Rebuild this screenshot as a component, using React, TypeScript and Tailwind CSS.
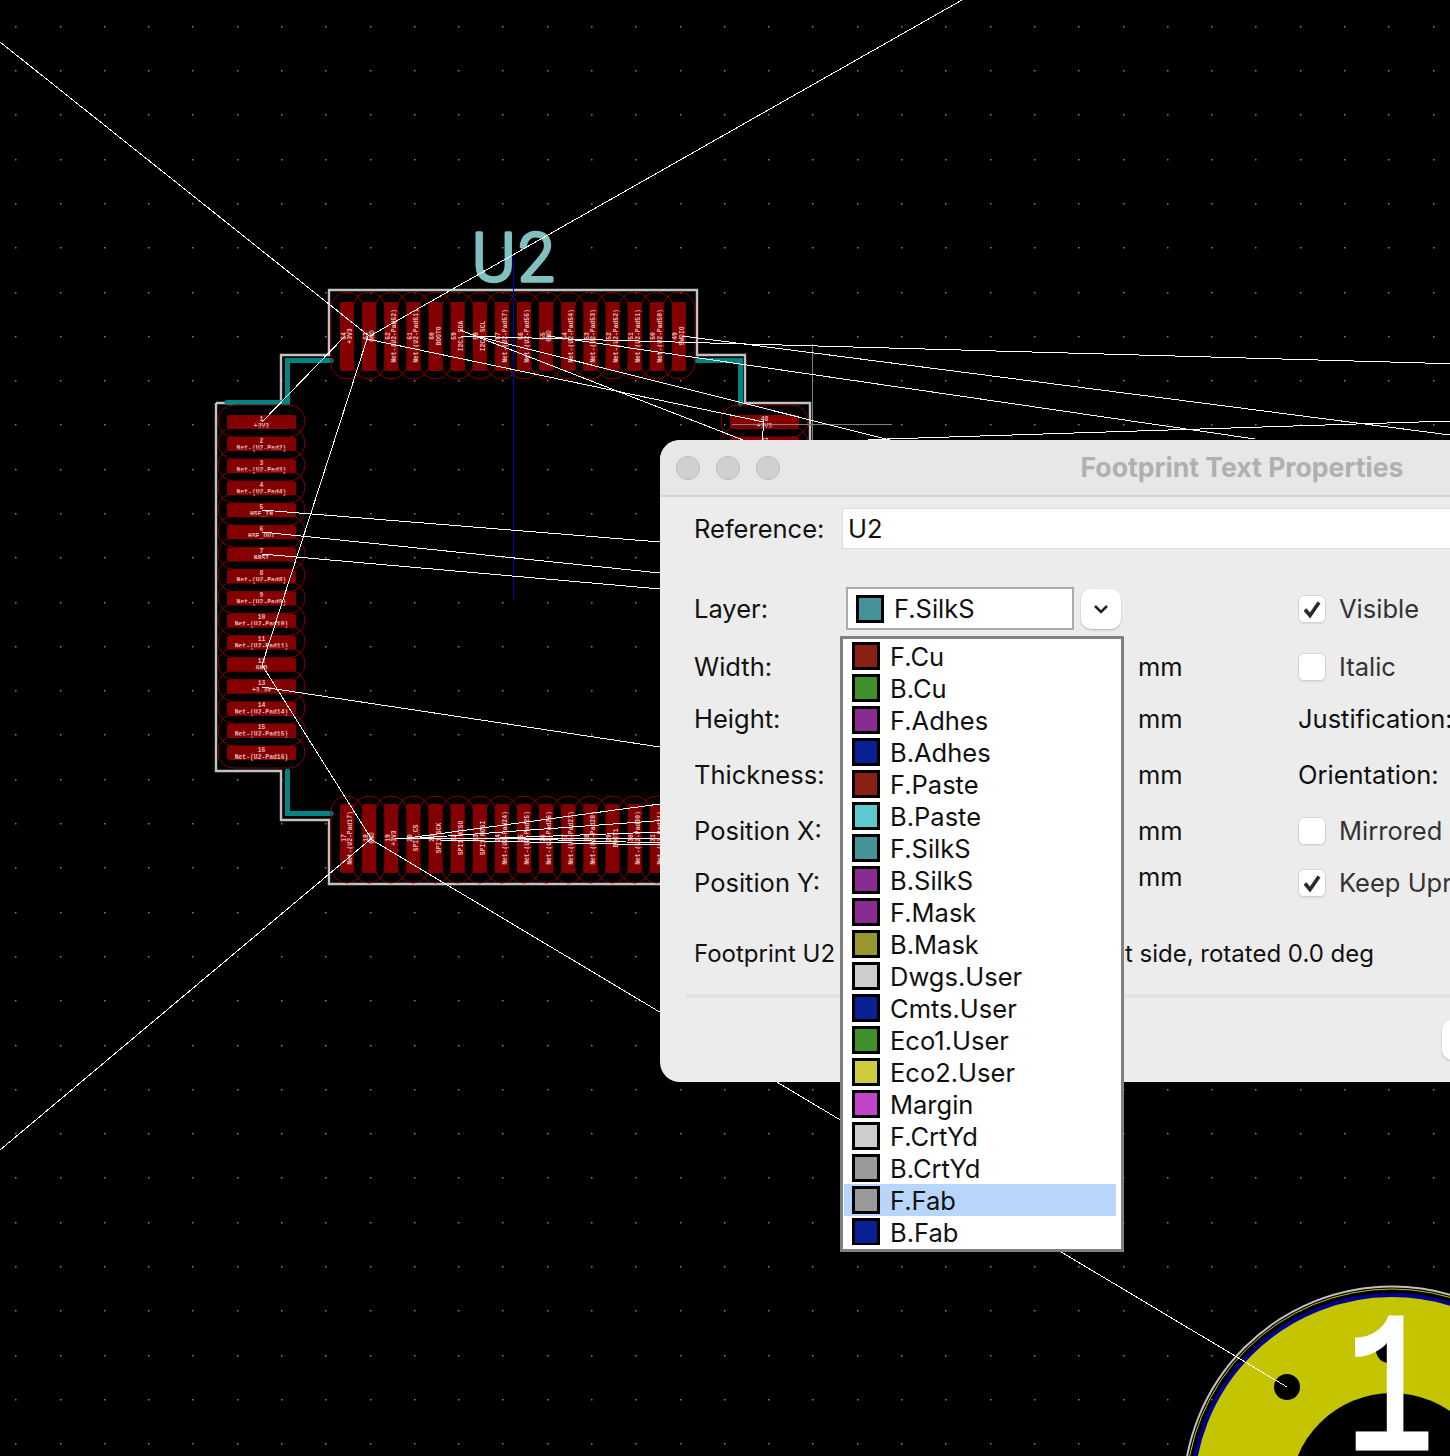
const topNets = ['+3V3', 'GND', 'Net-(U2-Pad62)', 'Net-(U2-Pad61)', 'BOOT0', 'I2C1_SDA', 'I2C1_SCL', 'Net-(U2-Pad57)', 'Net-(U2-Pad56)', 'GND', 'Net-(U2-Pad54)', 'Net-(U2-Pad53)', 'Net-(U2-Pad52)', 'Net-(U2-Pad51)', 'Net-(U2-Pad50)', 'SWDIO'];
const leftNets = ['+3V3', 'Net-(U2-Pad2)', 'Net-(U2-Pad3)', 'Net-(U2-Pad4)', 'HSE_IN', 'HSE_OUT', 'NRST', 'Net-(U2-Pad8)', 'Net-(U2-Pad9)', 'Net-(U2-Pad10)', 'Net-(U2-Pad11)', 'GND', '+3.3V', 'Net-(U2-Pad14)', 'Net-(U2-Pad15)', 'Net-(U2-Pad16)'];
const bottomNets = ['Net-(U2-Pad17)', 'GND', '+3V3', 'SPI1_CS', 'SPI1_SCK', 'SPI1_MISO', 'SPI1_MOSI', 'Net-(U2-Pad24)', 'Net-(U2-Pad25)', 'Net-(U2-Pad26)', 'Net-(U2-Pad27)', 'Net-(U2-Pad28)', 'BOOT1', 'Net-(U2-Pad30)', 'Net-(U2-Pad31)', 'Net-(U2-Pad32)'];

const airwires = [
  [0, 42, 369, 336],
  [962, 0, 370, 336],
  [262, 422, 345, 336],
  [368, 336, 262, 665],
  [262, 665, 372, 840],
  [372, 840, 1287, 1387],
  [372, 838, 0, 1150],
  [262, 510, 660, 542],
  [262, 532, 660, 573],
  [262, 554, 660, 589],
  [262, 687, 660, 747],
  [460, 336, 1450, 363.7],
  [682, 336, 1450, 435],
  [548, 336, 1255, 439],
  [367, 339, 764, 422],
  [480, 337, 890, 440],
  [460, 330, 743, 440],
  [764, 422, 762, 440],
  [868, 439.6, 1450, 421],
  [395, 838, 660, 838],
  [400, 839, 660, 804],
  [420, 838, 660, 820.6],
  [500, 838, 660, 832],
  [440, 840, 660, 845],
  [490, 838, 660, 843],
];

const layers = [
  ['F.Cu', 'bg-[#8b2010]'],
  ['B.Cu', 'bg-[#40902a]'],
  ['F.Adhes', 'bg-[#8b2a8f]'],
  ['B.Adhes', 'bg-[#0a2090]'],
  ['F.Paste', 'bg-[#8b2010]'],
  ['B.Paste', 'bg-[#5ccacc]'],
  ['F.SilkS', 'bg-[#459399]'],
  ['B.SilkS', 'bg-[#8b2a8f]'],
  ['F.Mask', 'bg-[#8b2a8f]'],
  ['B.Mask', 'bg-[#97972d]'],
  ['Dwgs.User', 'bg-[#cdcdcd]'],
  ['Cmts.User', 'bg-[#0a2090]'],
  ['Eco1.User', 'bg-[#40902a]'],
  ['Eco2.User', 'bg-[#cdcc3d]'],
  ['Margin', 'bg-[#c045c8]'],
  ['F.CrtYd', 'bg-[#cdcdcd]'],
  ['B.CrtYd', 'bg-[#999999]'],
  ['F.Fab', 'bg-[#999999]'],
  ['B.Fab', 'bg-[#0a2090]'],
];

const pitch = 22.13;
const labelColor = '#e6bcbc';
const mono = '"Liberation Mono", monospace';

function VerticalPad({ i, y, ovalY, num, net }: { i: number; y: number; ovalY: number; num: number; net: string }) {
  const x = 340 + i * pitch;
  return (
    <g>
      <rect x={x - 9} y={ovalY} width={32} height={87} rx={16} fill="none" stroke="#840000" strokeWidth={1} />
      <rect x={x} y={y} width={14} height={69} rx={2} fill="#840000" />
      <text transform={`translate(${x + 5.5} ${y + 34}) rotate(-90)`} textAnchor="middle" fontFamily={mono} fontWeight={700} fontSize={6.4} fill={labelColor}>
        {num}
      </text>
      <text transform={`translate(${x + 12} ${y + 34}) rotate(-90)`} textAnchor="middle" fontFamily={mono} fontWeight={700} fontSize={6.4} fill={labelColor}>
        {net}
      </text>
    </g>
  );
}

function HorizontalPad({ x, y, num, net }: { x: number; y: number; num: number; net: string }) {
  return (
    <g>
      <rect x={x - 9} y={y - 10} width={87} height={32} rx={16} fill="none" stroke="#840000" strokeWidth={1} />
      <rect x={x} y={y} width={69} height={14} rx={2} fill="#840000" />
      <text x={x + 34.5} y={y + 5.5} textAnchor="middle" fontFamily={mono} fontWeight={700} fontSize={6.4} fill={labelColor}>
        {num}
      </text>
      <text x={x + 34.5} y={y + 12.5} textAnchor="middle" fontFamily={mono} fontWeight={700} fontSize={6.4} fill={labelColor}>
        {net}
      </text>
    </g>
  );
}

function Board() {
  const dots = [];
  for (let r = 0; r < 33; r++) {
    for (let c = 0; c < 33; c++) {
      dots.push(<rect key={`${r}-${c}`} x={Math.round(15.25 + c * 44.29)} y={Math.round(25.85 + r * 44.29)} width={1.5} height={1.5} fill="#808080" />);
    }
  }
  return (
    <svg className="absolute left-0 top-0" width={1450} height={1456} viewBox="0 0 1450 1456">
      {dots}
      <path
        d="M216 403V771H281V820H329V884H660M216 403H281V355H329V290H697V355H745V403H810V440"
        fill="none"
        stroke="#c2c2c2"
        strokeWidth={2.4}
      />
      <path d="M227 402.5H287.5V360.5H331M697 360.5H740.5V404M287.5 771V813.5H331" fill="none" stroke="#008484" strokeWidth={5} strokeLinecap="round" />
      {topNets.map((net, i) => (
        <VerticalPad key={i} i={i} y={302} ovalY={292} num={64 - i} net={net} />
      ))}
      {bottomNets.map((net, i) => (
        <VerticalPad key={i} i={i} y={804} ovalY={796} num={17 + i} net={net} />
      ))}
      {leftNets.map((net, i) => (
        <HorizontalPad key={i} x={227} y={415 + i * 22.07} num={i + 1} net={net} />
      ))}
      <HorizontalPad x={730} y={415} num={48} net="+3V3" />
      <HorizontalPad x={730} y={437} num={47} net="GND" />

      <g fill="#80c0c0" stroke="#80c0c0" strokeWidth={3.4} strokeLinejoin="round" fontFamily="Roboto, sans-serif" fontWeight={300} fontSize={66}>
        <text x={472} y={280.5}>U</text>
        <text x={518} y={280.5}>2</text>
      </g>

      <line x1={513.5} y1={258} x2={513.5} y2={600} stroke="#0000c0" strokeWidth={1} />
      <line x1={732} y1={424.5} x2={892} y2={424.5} stroke="#808080" strokeWidth={1} />
      <line x1={812.5} y1={344} x2={812.5} y2={440} stroke="#808080" strokeWidth={1} />

      <circle cx={1392} cy={1495} r={208.5} fill="none" stroke="#c2c2c2" strokeWidth={2} />
      <circle cx={1392} cy={1495} r={206} fill="none" stroke="#c4c400" strokeWidth={1} />
      <circle cx={1392} cy={1495} r={200} fill="#c4c400" stroke="#000090" strokeWidth={4} />
      <circle cx={1392} cy={1495} r={102} fill="#000000" />
      <circle cx={1287} cy={1387} r={13} fill="#000000" />
      <circle cx={1389} cy={1350} r={13} fill="#000000" />

      <g shapeRendering="crispEdges">
        {airwires.map(([x1, y1, x2, y2], i) => (
          <line key={i} x1={x1} y1={y1} x2={x2} y2={y2} stroke="#ffffff" strokeWidth={1} />
        ))}
      </g>

      <text transform="translate(1390 1448) scale(0.74 1)" textAnchor="middle" fontFamily={mono} fontSize={196} fill="#ffffff" stroke="#ffffff" strokeWidth={5}>
        1
      </text>
    </svg>
  );
}

function Swatch({ color }: { color: string }) {
  return <span className={`h-7 w-7 shrink-0 border-[3px] border-black ${color}`} />;
}

function Checkbox({ checked, label }: { checked?: boolean; label: string }) {
  return (
    <div className="flex items-center gap-[13px] whitespace-nowrap text-[#333333]">
      <span className="flex h-7 w-7 items-center justify-center rounded-md border border-[#d4d4d4] bg-white shadow-[0_1px_1px_rgba(0,0,0,0.08)]">
        {checked && (
          <svg width="20" height="20" viewBox="0 0 20 20" fill="none" stroke="#2a2a2a" strokeWidth={3.6}>
            <path d="M3 10.5 8 16.5 17 3.5" />
          </svg>
        )}
      </span>
      <span>{label}</span>
    </div>
  );
}

function Row({ label, mt, right, mmClass = '' }: { label: string; mt: string; right: React.ReactNode; mmClass?: string }) {
  return (
    <div className={`flex h-10 items-center ${mt}`}>
      <span className="w-[444px] shrink-0">{label}</span>
      <span className={`w-[160px] shrink-0 ${mmClass}`}>mm</span>
      <div className="whitespace-nowrap">{right}</div>
    </div>
  );
}

export default function App() {
  return (
    <div className="relative h-[1456px] w-[1450px] overflow-hidden bg-black font-['Inter',sans-serif] text-[25.5px] text-[#111111]">
      <Board />

      <div className="absolute left-[660px] top-[440px] flex h-[642px] w-[1164px] flex-col rounded-[20px] bg-[#ececec]">
        <div className="relative flex h-[57px] shrink-0 items-center justify-center rounded-t-[20px] border-b-2 border-[#d4d4d4] bg-[#e7e7e7]">
          <div className="absolute left-4 flex gap-4">
            <span className="h-6 w-6 rounded-full border border-[#bababa] bg-[#d0d0d0]" />
            <span className="h-6 w-6 rounded-full border border-[#bababa] bg-[#d0d0d0]" />
            <span className="h-6 w-6 rounded-full border border-[#bababa] bg-[#d0d0d0]" />
          </div>
          <span className="text-[26.6px] font-bold text-[#b0b0b0]">Footprint Text Properties</span>
        </div>

        <div className="flex flex-col pl-[34px]">
          <div className="mt-[11px] flex h-[41px] items-center">
            <span className="w-[148px] shrink-0 pt-[2px]">Reference:</span>
            <div className="flex h-full flex-1 items-center border border-[#dcdcdc] bg-white pl-[5px] pt-[2px]">U2</div>
          </div>

          <div className="mt-[38px] flex h-[44px] items-center">
            <span className="w-[152px] shrink-0">Layer:</span>
            <div className="flex h-[43px] w-[228px] items-center gap-[10px] self-start border-2 border-[#ababab] bg-white pl-2">
              <Swatch color="bg-[#459399]" />
              <span className="pt-[2px]">F.SilkS</span>
            </div>
            <button className="ml-[7px] flex h-10 w-10 items-center justify-center rounded-[10px] bg-white shadow-[0_1px_2px_rgba(0,0,0,0.25)]">
              <svg width="16" height="10" viewBox="0 0 16 10" fill="none" stroke="#222222" strokeWidth={2.6}>
                <path d="M2 2 8 8 14 2" />
              </svg>
            </button>
            <div className="ml-[177px] whitespace-nowrap">
              <Checkbox checked label="Visible" />
            </div>
          </div>

          <Row label="Width:" mt="mt-[16px]" right={<Checkbox label="Italic" />} />
          <Row label="Height:" mt="mt-[12px]" right="Justification:" />
          <Row label="Thickness:" mt="mt-[16px]" right="Orientation:" />
          <Row label="Position X:" mt="mt-[16px]" right={<Checkbox label="Mirrored" />} />
          <Row label="Position Y:" mt="mt-[12px]" mmClass="pb-[12px]" right={<Checkbox checked label="Keep Upright" />} />

          <div className="mt-[34px] flex h-8 w-[680px] items-center justify-between pt-[2px] text-[24px]">
            <span>Footprint U2</span>
            <span>front side, rotated 0.0 deg</span>
          </div>
          <div className="-ml-2 mt-[25px] h-1 bg-[#e3e3e3]" />
          <button className="ml-[748px] mt-[22px] h-10 w-[120px] rounded-[10px] bg-white shadow-[0_1px_2px_rgba(0,0,0,0.25)]" />
        </div>

        <div className="absolute left-[180px] top-[196px] h-[616px] w-[284px] border-[3px] border-[#808080] bg-white pl-px pr-[5px] pt-px">
          <div className="h-[605px] overflow-hidden">
            {layers.map(([name, color]) => (
              <div key={name} className={`flex h-8 items-center gap-[10px] pl-2 ${name === 'F.Fab' ? 'bg-[#b8d6fb]' : ''}`}>
                <Swatch color={color} />
                <span className="pt-[2px]">{name}</span>
              </div>
            ))}
          </div>
        </div>
      </div>
    </div>
  );
}
